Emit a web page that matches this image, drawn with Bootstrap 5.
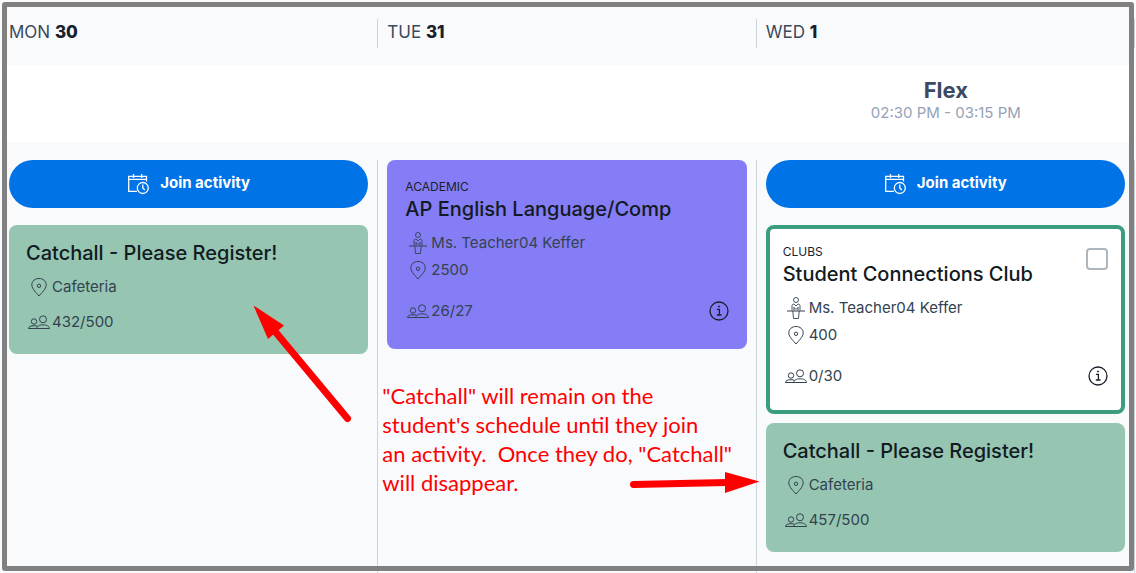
<!DOCTYPE html>
<html lang="en">
<head>
<meta charset="utf-8">
<meta name="viewport" content="width=device-width, initial-scale=1">
<title>Weekly schedule</title>
<link href="https://cdn.jsdelivr.net/npm/bootstrap@5.3.0/dist/css/bootstrap.min.css" rel="stylesheet">
<style>
  body { background: #f9fafc; color: #33424f; font-family: Inter, "Liberation Sans", sans-serif; font-size: 15px; }
  .planner { padding-right: 1px; }
  .day-head { padding: 19px 0 17px; }
  .day-head > div { height: 29px; padding-left: 9px; border-right: 1px solid #cbd5de; color: #3a4a5c; font-size: 17px; line-height: 26px; }
  .day-head strong { color: #17212b; font-weight: 800; }
  .period-band { background: #fff; height: 77px; padding-top: 11px; }
  .period-name { color: #3a4a63; font-size: 22px; line-height: 28px; font-weight: 700; }
  .period-time { color: #94a3b8; line-height: 18px; }
  .day-grid { padding-top: 18px; }
  .day-col { padding: 0 9px 12px; border-right: 1px solid #cbd5de; position: relative; }
  .join { height: 48px; background: #0073e6; color: #fff; font-size: 15px; font-weight: 700; line-height: 20px; padding: 0 0 2px; margin-bottom: 17px; }
  .join:hover { background: #0066cc; color: #fff; }
  .join svg { width: 22px; height: 22px; margin: 2px 11px 0 0; }
  .activity { border-radius: 8px; padding: 16px 17px 19px; margin-bottom: 9px; }
  .activity.detailed { padding-bottom: 25px; }
  .activity:last-child { margin-bottom: 0; }
  .fallback { background: #96c6b2; }
  .academic { background: #857df5; padding-left: 18px; padding-right: 18px; }
  .club { background: #fff; box-shadow: inset 0 0 0 4px #3a9d7f; }
  .kind { color: #17212b; font-size: 12px; line-height: 21px; }
  .title { color: #121a22; font-size: 20px; line-height: 24px; font-weight: 500; margin: 0 0 8px; }
  .fact { line-height: 27px; }
  .fact > svg { width: 26px; height: 24px; flex: none; }
  .seats { margin-top: 8px; }
  .detailed .seats { margin-top: 14px; }
  svg { fill: none; stroke: currentColor; }
  .info { color: #17212b; line-height: 0; }
  .pick { position: absolute; top: 23px; right: 17px; width: 22px; height: 22px; margin: 0; border: 2px solid #adb5bd; }
  .pick.form-check-input { border-radius: 4px; }
  .note { color: #f00; font-family: Lato, sans-serif; font-size: 22px; line-height: 29px; margin: 32px 0 0 -5px; white-space: pre; }
  .arrow { position: absolute; fill: #f00; stroke: #f00; z-index: 2; }
  .arrow-up { left: 252px; top: 144px; }
  .arrow-right { right: -4px; top: 308px; }
  .frame { position: absolute; inset: 2px; border: 5px solid #808080; border-radius: 3px; pointer-events: none; z-index: 3; }
</style>
</head>
<body>
<svg class="d-none" xmlns="http://www.w3.org/2000/svg">
  <symbol id="i-cal" viewBox="0 0 22 22"><path stroke-width="1.3" d="M10 18.300H1.700V3.300H19.500V8.500M1.700 6.300H19.500M6.500 1V5M14.700 1V5"/><circle cx="15.800" cy="15" r="5.500" stroke-width="1.300"/><path stroke-width="1.300" d="M15.800 11.500V15L17.800 17"/></symbol>
  <symbol id="i-pin" viewBox="0 0 26 24"><path d="M13 21C11 18.500 5.800 14 5.800 9.900C5.800 6 9 3.500 13 3.500S20.200 6 20.200 9.900C20.200 14 15 18.500 13 21Z"/><circle cx="13" cy="10.800" r="1.700"/></symbol>
  <symbol id="i-people" viewBox="0 0 26 24"><circle cx="8" cy="11.500" r="2.700"/><circle cx="17" cy="9.300" r="3.500"/><path d="M11.500 18.500H2.500C2.500 16.600 5 15.700 8 15.700C9.500 15.700 10.500 15.900 11.500 16.300M10.800 18.500C10.800 16.200 13.500 14.800 17 14.800S23.500 16.200 23.500 18.500Z"/></symbol>
  <symbol id="i-teacher" viewBox="0 0 26 24"><g stroke-width=".9"><circle cx="13" cy="4" r="2.500"/><path d="M9 14.500V9.800C9 8.600 10 8 11 8L13 10L15 8C16 8 17 8.600 17 9.800V14.500M11 14.500V11M15 14.500V11M11 11.500L13 13.500L15 11.500M9.800 15L10.500 22.500H15.500L16.200 15"/></g><path d="M4 15H22"/></symbol>
  <symbol id="i-info" viewBox="0 0 20 20"><circle cx="10" cy="10" r="9" stroke-width="1.300"/><path stroke-width="1.300" d="M8 8.300H10.400V14M7.800 14H12.600"/><circle cx="10" cy="5.500" r=".6" fill="currentColor"/></symbol>
</svg>

<main class="planner position-relative min-vh-100 d-flex flex-column">
  <header class="day-head row g-0">
    <div class="col-4">MON <strong>30</strong></div>
    <div class="col-4">TUE <strong>31</strong></div>
    <div class="col-4">WED <strong>1</strong></div>
  </header>
  <section class="period-band row g-0 text-center">
    <div class="col-4 offset-8">
      <div class="period-name">Flex</div>
      <div class="period-time">02:30 PM - 03:15 PM</div>
    </div>
  </section>
  <section class="day-grid row g-0 flex-grow-1">
    <div class="day-col col-4">
      <button type="button" class="join btn rounded-pill border-0 w-100 d-flex align-items-center justify-content-center"><svg><use href="#i-cal"/></svg>Join activity</button>
      <article class="activity fallback">
        <h2 class="title">Catchall - Please Register!</h2>
        <div class="fact d-flex align-items-center"><svg><use href="#i-pin"/></svg>Cafeteria</div>
        <div class="fact seats d-flex align-items-center"><svg><use href="#i-people"/></svg>432/500</div>
      </article>
      <svg class="arrow arrow-up" width="104" height="122" viewBox="252 304 104 122"><path stroke="none" d="M253.500 305.500L284 325.500L268 339Z"/><path stroke-width="7" stroke-linecap="round" d="M273 329L347.500 418.500"/></svg>
    </div>
    <div class="day-col col-4">
      <article class="activity academic detailed">
        <div class="kind">ACADEMIC</div>
        <h2 class="title">AP English Language/Comp</h2>
        <div class="fact d-flex align-items-center"><svg><use href="#i-teacher"/></svg>Ms. Teacher04 Keffer</div>
        <div class="fact d-flex align-items-center"><svg><use href="#i-pin"/></svg>2500</div>
        <div class="fact seats d-flex align-items-center"><svg><use href="#i-people"/></svg>26/27
          <button type="button" class="info btn border-0 p-0 ms-auto" aria-label="Details"><svg width="20" height="20"><use href="#i-info"/></svg></button></div>
      </article>
      <p class="note">"Catchall" will remain on the
student's schedule until they join
an activity.  Once they do, "Catchall"
will disappear.</p>
      <svg class="arrow arrow-right" width="132" height="30" viewBox="628 468 132 30"><path stroke="none" d="M725 472L759.500 481.500L725 493Z"/><path stroke-width="7" stroke-linecap="round" d="M633.500 484.500L727 482.500"/></svg>
    </div>
    <div class="day-col col-4">
      <button type="button" class="join btn rounded-pill border-0 w-100 d-flex align-items-center justify-content-center"><svg><use href="#i-cal"/></svg>Join activity</button>
      <article class="activity club detailed position-relative">
        <input class="pick form-check-input" type="checkbox" id="pick-club">
        <div class="kind">CLUBS</div>
        <h2 class="title"><label for="pick-club">Student Connections Club</label></h2>
        <div class="fact d-flex align-items-center"><svg><use href="#i-teacher"/></svg>Ms. Teacher04 Keffer</div>
        <div class="fact d-flex align-items-center"><svg><use href="#i-pin"/></svg>400</div>
        <div class="fact seats d-flex align-items-center"><svg><use href="#i-people"/></svg>0/30
          <button type="button" class="info btn border-0 p-0 ms-auto" aria-label="Details"><svg width="20" height="20"><use href="#i-info"/></svg></button></div>
      </article>
      <article class="activity fallback">
        <h2 class="title">Catchall - Please Register!</h2>
        <div class="fact d-flex align-items-center"><svg><use href="#i-pin"/></svg>Cafeteria</div>
        <div class="fact seats d-flex align-items-center"><svg><use href="#i-people"/></svg>457/500</div>
      </article>
    </div>
  </section>
  <div class="frame"></div>
</main>
<script src="https://cdn.jsdelivr.net/npm/bootstrap@5.3.0/dist/js/bootstrap.bundle.min.js"></script>
</body>
</html>
